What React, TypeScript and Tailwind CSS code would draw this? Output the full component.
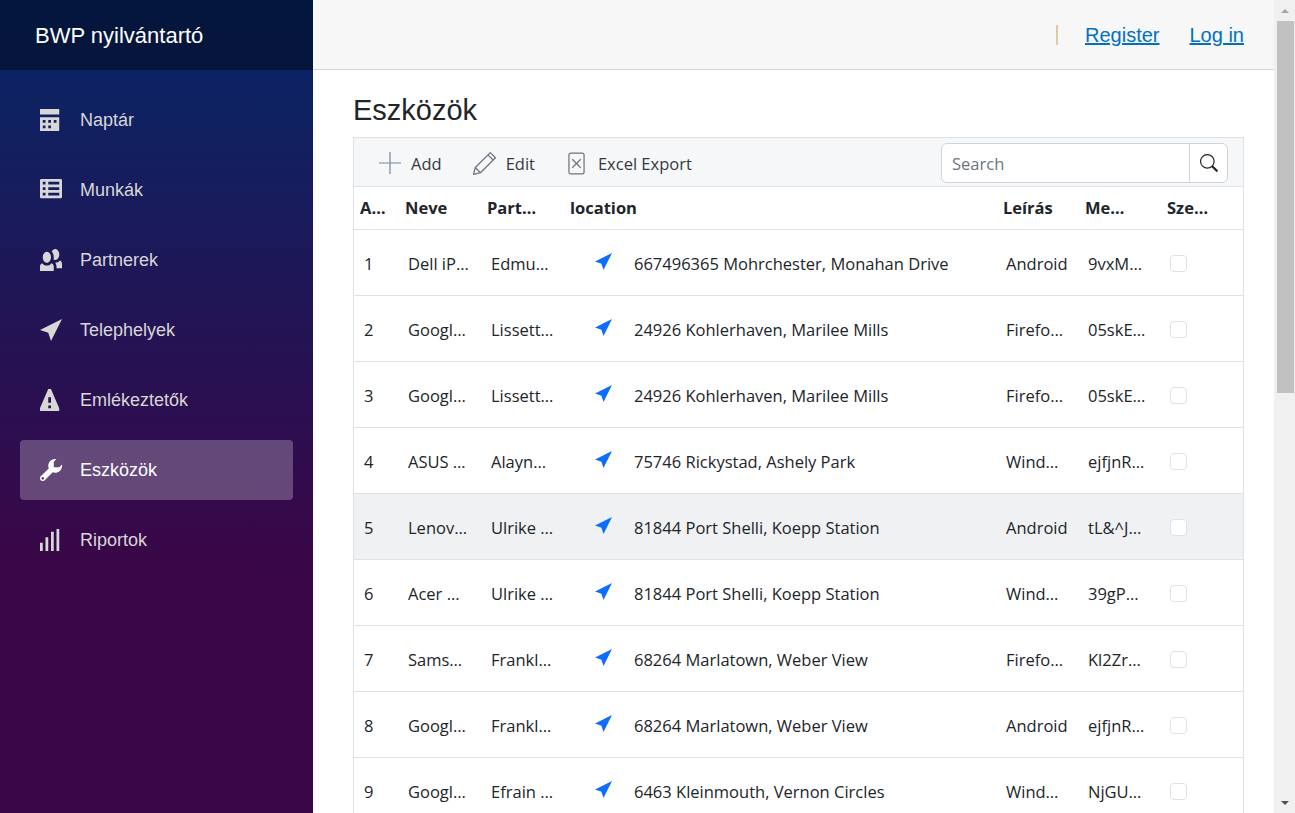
const rows = [
  ['1', 'Dell iP…', 'Edmu…', '667496365 Mohrchester, Monahan Drive', 'Android', '9vxM…'],
  ['2', 'Googl…', 'Lissett…', '24926 Kohlerhaven, Marilee Mills', 'Firefo…', '05skE…'],
  ['3', 'Googl…', 'Lissett…', '24926 Kohlerhaven, Marilee Mills', 'Firefo…', '05skE…'],
  ['4', 'ASUS …', 'Alayn…', '75746 Rickystad, Ashely Park', 'Wind…', 'ejfjnR…'],
  ['5', 'Lenov…', 'Ulrike …', '81844 Port Shelli, Koepp Station', 'Android', 'tL&^J…'],
  ['6', 'Acer …', 'Ulrike …', '81844 Port Shelli, Koepp Station', 'Wind…', '39gP…'],
  ['7', 'Sams…', 'Frankl…', '68264 Marlatown, Weber View', 'Firefo…', 'Kl2Zr…'],
  ['8', 'Googl…', 'Frankl…', '68264 Marlatown, Weber View', 'Android', 'ejfjnR…'],
  ['9', 'Googl…', 'Efrain …', '6463 Kleinmouth, Vernon Circles', 'Wind…', 'NjGU…'],
]

const navIcons: Record<string, string> = {
  calendar:
    'M0 0v2h7v-2h-7zm0 3v4.91c0 .05.04.09.09.09h6.81c.05 0 .09-.04.09-.09v-4.91h-7zm1 1h1v1h-1v-1zm2 0h1v1h-1v-1zm2 0h1v1h-1v-1zm-4 2h1v1h-1v-1zm2 0h1v1h-1v-1z',
  list: 'M.5 0c-.28 0-.5.22-.5.5v6c0 .28.22.5.5.5h7c.28 0 .5-.22.5-.5v-6c0-.28-.22-.5-.5-.5h-7zm.5 1h1v1h-1v-1zm2 0h4v1h-4v-1zm-2 2h1v1h-1v-1zm2 0h4v1h-4v-1zm-2 2h1v1h-1v-1zm2 0h4v1h-4v-1z',
  people:
    'M5.5 0c-.51 0-.95.35-1.22.88.45.54.72 1.28.72 2.13 0 .29-.03.55-.09.81.19.11.38.19.59.19.83 0 1.5-.9 1.5-2s-.67-2-1.5-2zm-3 1c-.83 0-1.5.9-1.5 2s.67 2 1.5 2 1.5-.9 1.5-2-.67-2-1.5-2zm4.75 3.16c-.43.51-1.02.82-1.69.84.27.38.44.84.44 1.34v.66h2v-1.66c0-.52-.31-.97-.75-1.19zm-6.5 1c-.44.22-.75.67-.75 1.19v1.66h5v-1.66c0-.52-.31-.97-.75-1.19-.45.53-1.06.84-1.75.84s-1.3-.32-1.75-.84z',
  location: 'M8 0l-8 4 3 1 1 3 4-8z',
  warning:
    'M3.09 0c-.06 0-.1.04-.13.09l-2.94 6.81c-.02.05-.03.13-.03.19v.81c0 .05.04.09.09.09h6.81c.05 0 .09-.04.09-.09v-.81c0-.05-.01-.14-.03-.19l-2.94-6.81c-.02-.05-.07-.09-.13-.09h-.81zm-.09 3h1v2h-1v-2zm0 3h1v1h-1v-1z',
  wrench:
    'M5.5 0c-1.38 0-2.5 1.12-2.5 2.5 0 .32.08.62.19.91l-2.91 2.88c-.39.39-.39 1.05 0 1.44.2.2.46.28.72.28.26 0 .52-.09.72-.28l2.88-2.91c.28.11.58.19.91.19 1.38 0 2.5-1.12 2.5-2.5 0-.16 0-.32-.03-.47l-.97.97h-2v-2l.97-.97c-.15-.03-.31-.03-.47-.03zm-4.5 6.5c.28 0 .5.22.5.5s-.22.5-.5.5-.5-.22-.5-.5.22-.5.5-.5z',
  signal: 'M6 0v8h1v-8h-1zm-2 1v7h1v-7h-1zm-2 2v5h1v-5h-1zm-2 2v3h1v-3h-1z',
}

const navItems = [
  { label: 'Naptár', icon: 'calendar' },
  { label: 'Munkák', icon: 'list' },
  { label: 'Partnerek', icon: 'people' },
  { label: 'Telephelyek', icon: 'location' },
  { label: 'Emlékeztetők', icon: 'warning' },
  { label: 'Eszközök', icon: 'wrench', active: true },
  { label: 'Riportok', icon: 'signal' },
]

function OpenIcon({ name, className }: { name: string; className: string }) {
  return (
    <svg viewBox="0 0 8 8" className={className} fill="currentColor">
      <path d={navIcons[name]} />
    </svg>
  )
}

function Sidebar() {
  return (
    <div className="w-[313px] shrink-0 h-full bg-linear-to-b/srgb from-[#052767] to-[#3a0647] to-70% font-['Liberation_Sans',sans-serif]">
      <div className="h-[70px] flex items-center pl-[35px] bg-black/40 text-white text-[22px]">BWP nyilvántartó</div>
      <nav className="flex flex-col gap-[10px] pt-[20px] px-[20px]">
        {navItems.map((item) => (
          <a
            key={item.label}
            className={`h-[60px] flex items-center pl-[20px] rounded text-[18px] ${
              item.active ? 'bg-white/25 text-white' : 'text-[#d7d7d7]'
            }`}
          >
            <OpenIcon name={item.icon} className="w-[22px] h-[22px] mr-[18px]" />
            {item.label}
          </a>
        ))}
      </nav>
    </div>
  )
}

function TopRow() {
  return (
    <div className="h-[70px] shrink-0 flex items-center justify-end pr-[30px] bg-[#f7f7f7] border-b border-[#d6d5d5] font-['Liberation_Sans',sans-serif] text-[20px] text-[#0071c1]">
      <div className="w-[2px] h-[20px] bg-[#e0c8a8] mr-[27px]" />
      <a className="underline mr-[30px]">Register</a>
      <a className="underline">Log in</a>
    </div>
  )
}

function Toolbar() {
  return (
    <div className="h-[49px] flex items-center bg-[#f6f7f9] border-b border-[#dee2e6] pt-[2px] pl-[25px] pr-[15px] text-[#343a40]">
      <svg viewBox="0 0 22 22" className="w-[22px] h-[22px] mr-[10px] text-[#6f89a3]" fill="none" stroke="currentColor" strokeWidth="1.2">
        <path d="M0 11h22M11 0v22" />
      </svg>
      <span className="pt-[2px]">Add</span>
      <svg viewBox="2 2 20 20" className="ml-[31px] mr-[10px] w-[23px] h-[23px] text-[#6c757d]" fill="none" stroke="currentColor" strokeWidth="1.1" strokeLinejoin="round">
        <path d="M2.5 21.5l1.5-6L17 2.5l4.5 4.5L8.5 20z" />
        <path d="M4 15.5l4.5 4.5M15 4.5l4.5 4.5" />
      </svg>
      <span className="pt-[2px]">Edit</span>
      <svg viewBox="0 0 18 24" className="ml-[33px] mr-[13px] w-[17px] h-[23px] text-[#6c757d]" fill="none" stroke="currentColor" strokeWidth="1.3">
        <rect x="1" y="1" width="16" height="22" rx="2" />
        <path d="M4.5 7.5l9 9M13.5 7.5l-9 9" />
      </svg>
      <span className="pt-[2px]">Excel Export</span>
      <div className="ml-auto w-[287px] h-[40px] flex bg-white border border-[#ced4da] rounded-md">
        <div className="flex-1 flex items-center pl-[10px] pt-[3px] text-[#6c757d]">Search</div>
        <div className="w-[38px] flex items-center justify-center border-l border-[#ced4da]">
          <svg viewBox="0 0 16 16" className="w-[18px] h-[18px] text-[#212529]" fill="currentColor">
            <path d="M11.742 10.344a6.5 6.5 0 1 0-1.397 1.398l3.85 3.85a1 1 0 0 0 1.415-1.414l-3.868-3.834zM12 6.5a5.5 5.5 0 1 1-11 0 5.5 5.5 0 0 1 11 0z" />
          </svg>
        </div>
      </div>
    </div>
  )
}

const gridCols = 'grid grid-cols-[45px_82px_83px_433px_82px_82px_82px]'

function DataTable() {
  return (
    <div className="border-x border-t border-[#dee2e6] text-[16.5px] text-[#212529]">
      <Toolbar />
      <div className={`${gridCols} h-[43px] items-center border-b border-[#dee2e6] font-bold whitespace-nowrap pt-[1px]`}>
        <div className="pl-[6px]">A…</div>
        <div className="pl-[6px]">Neve</div>
        <div className="pl-[6px]">Part…</div>
        <div className="pl-[6px]">location</div>
        <div className="pl-[6px]">Leírás</div>
        <div className="pl-[6px]">Me…</div>
        <div className="pl-[6px]">Sze…</div>
      </div>
      {rows.map((r, i) => (
        <div
          key={r[0]}
          className={`${gridCols} h-[66px] items-center border-b border-[#dee2e6] whitespace-nowrap pt-[3px] ${i === 4 ? 'bg-[#eff1f3]' : ''}`}
        >
          <div className="pl-[10px]">{r[0]}</div>
          <div className="pl-[9px]">{r[1]}</div>
          <div className="pl-[10px]">{r[2]}</div>
          <div className="flex items-center pl-[31px]">
            <OpenIcon name="location" className="w-[17px] h-[17px] text-[#0d6efd] mr-[22px] mb-[5px]" />
            {r[3]}
          </div>
          <div className="pl-[9px]">{r[4]}</div>
          <div className="pl-[9px]">{r[5]}</div>
          <div className="pl-[9px]">
            <div className="w-[17px] h-[17px] mb-[2px] rounded-[4px] bg-white border border-[#dee2e6]" />
          </div>
        </div>
      ))}
    </div>
  )
}

function Scrollbar() {
  return (
    <div className="w-[21px] shrink-0 h-full bg-[#f0f0f0] flex flex-col items-center pl-[1px]">
      <div className="h-[21px] flex items-center justify-center">
        <div className="border-x-[4px] border-x-transparent border-b-[4px] border-b-[#a3a3a3]" />
      </div>
      <div className="w-[17px] h-[372px] bg-[#c1c1c1]" />
      <div className="mt-auto h-[21px] flex items-center justify-center">
        <div className="border-x-[4px] border-x-transparent border-t-[4px] border-t-[#505050]" />
      </div>
    </div>
  )
}

export default function App() {
  return (
    <div className="h-[813px] w-[1295px] flex overflow-hidden bg-white">
      <Sidebar />
      <div className="flex-1 min-w-0 h-full flex flex-col overflow-hidden font-['Open_Sans',sans-serif]">
        <TopRow />
        <div className="pl-[40px] pr-[30px]">
          <h1 className="h-[67px] flex items-center pt-[14px] text-[29px] text-[#212529] font-['Liberation_Sans',sans-serif]">Eszközök</h1>
          <DataTable />
        </div>
      </div>
      <Scrollbar />
    </div>
  )
}
